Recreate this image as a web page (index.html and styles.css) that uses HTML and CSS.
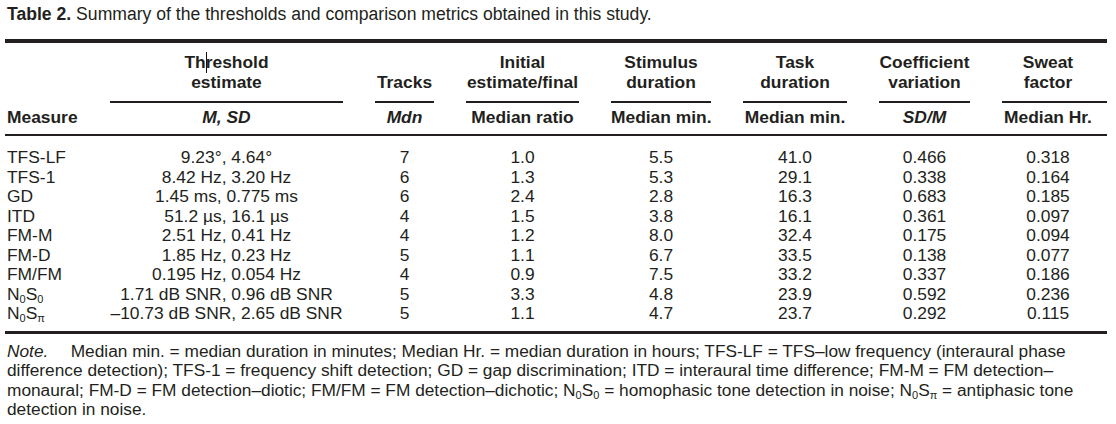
FILE: index.html
```html
<!DOCTYPE html>
<html lang="en">
<head>
<meta charset="utf-8">
<title>Table 2</title>
<link rel="stylesheet" href="styles.css">
</head>
<body>
<div class="page">
  <p class="caption"><b>Table 2.</b> Summary of the thresholds and comparison metrics obtained in this study.</p>
  <div class="table">
    <div class="thead">
      <div class="h-measure">Measure</div>
      <div class="h-top">Th<span class="caret-host"><span class="caret"></span></span>reshold<br>estimate</div>
      <div class="h-top">Tracks</div>
      <div class="h-top">Initial<br>estimate/final</div>
      <div class="h-top">Stimulus<br>duration</div>
      <div class="h-top">Task<br>duration</div>
      <div class="h-top">Coefficient<br>variation</div>
      <div class="h-top sweat">Sweat<br>factor</div>
      <div class="h-sub"><i>M, SD</i></div>
      <div class="h-sub"><i>Mdn</i></div>
      <div class="h-sub">Median ratio</div>
      <div class="h-sub">Median min.</div>
      <div class="h-sub">Median min.</div>
      <div class="h-sub"><i>SD/M</i></div>
      <div class="h-sub sweat">Median Hr.</div>
    </div>
    <div class="tbody">
      <div class="m">TFS-LF</div><div>9.23°, 4.64°</div><div>7</div><div>1.0</div><div>5.5</div><div>41.0</div><div>0.466</div><div class="sweat">0.318</div>
      <div class="m">TFS-1</div><div>8.42 Hz, 3.20 Hz</div><div>6</div><div>1.3</div><div>5.3</div><div>29.1</div><div>0.338</div><div class="sweat">0.164</div>
      <div class="m">GD</div><div>1.45 ms, 0.775 ms</div><div>6</div><div>2.4</div><div>2.8</div><div>16.3</div><div>0.683</div><div class="sweat">0.185</div>
      <div class="m">ITD</div><div>51.2 µs, 16.1 µs</div><div>4</div><div>1.5</div><div>3.8</div><div>16.1</div><div>0.361</div><div class="sweat">0.097</div>
      <div class="m">FM-M</div><div>2.51 Hz, 0.41 Hz</div><div>4</div><div>1.2</div><div>8.0</div><div>32.4</div><div>0.175</div><div class="sweat">0.094</div>
      <div class="m">FM-D</div><div>1.85 Hz, 0.23 Hz</div><div>5</div><div>1.1</div><div>6.7</div><div>33.5</div><div>0.138</div><div class="sweat">0.077</div>
      <div class="m">FM/FM</div><div>0.195 Hz, 0.054 Hz</div><div>4</div><div>0.9</div><div>7.5</div><div>33.2</div><div>0.337</div><div class="sweat">0.186</div>
      <div class="m">N<span class="sub">0</span>S<span class="sub">0</span></div><div>1.71 dB SNR, 0.96 dB SNR</div><div>5</div><div>3.3</div><div>4.8</div><div>23.9</div><div>0.592</div><div class="sweat">0.236</div>
      <div class="m">N<span class="sub">0</span>S<span class="sub">π</span></div><div>–10.73 dB SNR, 2.65 dB SNR</div><div>5</div><div>1.1</div><div>4.7</div><div>23.7</div><div>0.292</div><div class="sweat">0.115</div>
    </div>
  </div>
  <p class="note"><i class="note-label">Note.</i>Median min. = median duration in minutes; Median Hr. = median duration in hours; TFS-LF = TFS–low frequency (interaural phase<br>difference detection); TFS-1 = frequency shift detection; GD = gap discrimination; ITD = interaural time difference; FM-M = FM detection–<br>monaural; FM-D = FM detection–diotic; FM/FM = FM detection–dichotic; N<span class="sub">0</span>S<span class="sub">0</span> = homophasic tone detection in noise; N<span class="sub">0</span>S<span class="sub">π</span> = antiphasic tone<br>detection in noise.</p>
</div>
</body>
</html>
```

FILE: styles.css
```css
html, body {
  margin: 0;
  padding: 0;
  background: #ffffff;
}

body {
  color: #231f20;
  font-family: "Liberation Sans", Arial, Helvetica, sans-serif;
  font-size: 17.4px;
}

.page {
  width: 1102px;
  padding: 4px 0 0 5px;
}

.caption {
  margin: 0 0 15px 2px;
  font-size: 17.6px;
  line-height: 20px;
  white-space: nowrap;
}

.table {
  border-top: 4px solid #231f20;
}

.thead,
.tbody {
  display: grid;
  grid-template-columns: 73px 233px 59px 113px 100px 104px 91px 105px;
  column-gap: 32px;
  text-align: center;
  white-space: nowrap;
}

.thead {
  padding-top: 9px;
  border-bottom: 2px solid #231f20;
  font-weight: bold;
  line-height: 20px;
}

.h-measure {
  grid-row: 1 / span 2;
  align-self: end;
  text-align: left;
  padding: 0 0 7px 2px;
}

.h-top {
  align-self: end;
  padding-bottom: 9px;
  border-bottom: 2px solid #231f20;
}

.h-sub {
  padding: 4px 0 7px;
}

.sweat {
  padding-right: 13px;
}

.caret-host {
  position: relative;
}

.caret {
  position: absolute;
  left: 0;
  bottom: -1px;
  width: 1px;
  height: 21px;
  background: #111;
}

.tbody {
  padding: 12px 0 7.5px;
  border-bottom: 3px solid #231f20;
  line-height: 19.5px;
}

.tbody .m {
  text-align: left;
  padding-left: 2px;
}

.sub {
  font-size: 11px;
  line-height: 0;
  vertical-align: -3px;
}

.note {
  margin: 8px 0 0 2px;
  font-size: 17.3px;
  line-height: 19.4px;
  white-space: nowrap;
}

.note-label {
  display: inline-block;
  width: 63.7px;
}
```
